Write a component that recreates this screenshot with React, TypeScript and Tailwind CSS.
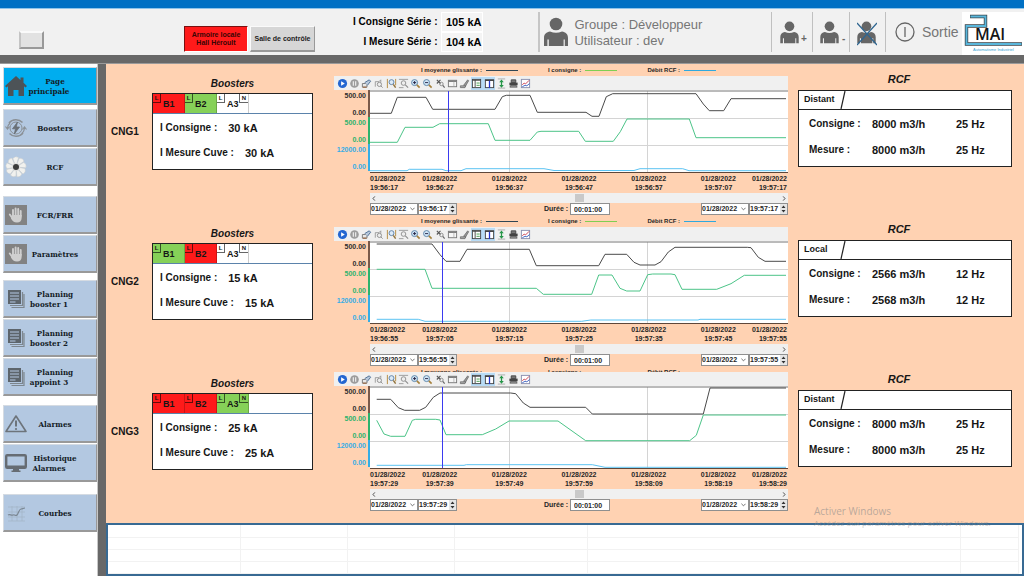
import { ReactNode } from "react";

type BoosterColor = "red" | "green" | "white";

interface TrendData {
  black: string;
  green: string;
  blue: string;
  cursor: number;
  times: string[];
}

interface Cell {
  name: string;
  boosters: BoosterColor[];
  consigne: string;
  mesure: string;
  rcfMode: string;
  rcfConsigne: [string, string];
  rcfMesure: [string, string];
  trend: TrendData;
}

const DATE = "01/28/2022";

const cells: Cell[] = [
  {
    name: "CNG1",
    boosters: ["red", "green", "white"],
    consigne: "30 kA",
    mesure: "30 kA",
    rcfMode: "Distant",
    rcfConsigne: ["8000 m3/h", "25 Hz"],
    rcfMesure: ["8000 m3/h", "25 Hz"],
    trend: {
      black:
        "0,22.3 21.3,22.3 27.3,6.3 56,6.3 62.7,18.3 125,18.3 132.3,5.7 136.3,4.3 160,4.3 167.3,21.3 216,21.3 222,25.3 229,25.3 236.3,5.7 242.7,2.7 326,2.7 333.3,13 339.3,19.7 353.7,19.7 361,7.7 416,7.7",
      green:
        "0,51.3 27.3,51.3 35,36.3 63,36.3 69.7,32.7 118.3,32.7 125,49.3 160,49.3 167.3,41 171,40.3 208.7,40.3 215.3,50.3 243.3,50.3 250.3,40.7 257,28 319.3,28 326,46.7 416,46.7",
      blue: "0,79.7 37,79.7 39.3,78.3 72,78.3 76,79.7 91,79.7 96,77.7 174,77.7 184,79.5 264,79.5 270,77.7 312.7,77.7 319,79.7 416,79.7",
      cursor: 78,
      times: ["19:56:17", "19:56:27", "19:56:37", "19:56:47", "19:56:57", "19:57:07", "19:57:17"],
    },
  },
  {
    name: "CNG2",
    boosters: ["green", "red", "white"],
    consigne: "15 kA",
    mesure: "15 kA",
    rcfMode: "Local",
    rcfConsigne: ["2566 m3/h", "12 Hz"],
    rcfMesure: ["2568 m3/h", "12 Hz"],
    trend: {
      black:
        "6.7,2 62,2 70,12.7 76,19.3 90,19.3 97,7.3 159.3,7.3 166.3,23.7 228.7,23.7 235,12.3 256.7,12.3 264,20.3 270,23 285,23 291,19.7 298.3,10 305,5.3 377.3,5.3 381,5.7 388.3,15.3 395,19.3 416,19.3",
      green:
        "6.7,27.3 55,27.3 62,46.3 166.3,46.3 173.3,52.3 221.7,52.3 228.7,33 242,33 250,46.3 256.7,49 270,49 277.7,32.7 282.7,32 301,32 305,32.7 312,47.3 346.7,47.3 361,41.7 374.3,33.3 416,33.3",
      blue: "6.7,77.3 48.3,77.3 55,79.3 211.7,79.3 220.7,78 328,78 330,77.3 416,77.3",
      cursor: 72,
      times: ["19:56:55", "19:57:05", "19:57:15", "19:57:25", "19:57:35", "19:57:45", "19:57:55"],
    },
  },
  {
    name: "CNG3",
    boosters: ["red", "red", "green"],
    consigne: "25 kA",
    mesure: "25 kA",
    rcfMode: "Distant",
    rcfConsigne: ["8000 m3/h", "25 Hz"],
    rcfMesure: ["8000 m3/h", "25 Hz"],
    trend: {
      black:
        "6.7,12.3 20.7,12.3 28.3,20.7 34.7,23.3 49.7,23.3 55.7,20.3 63.3,10.3 70,6 140.7,6 145.7,6.7 153.3,16 160,20.3 215.7,20.3 222.3,27 333.3,27 340,1 416,1",
      green:
        "6.7,33.3 14,47 20.7,49.3 35,49.3 42.3,33.3 45.7,32.3 65.7,32.3 70,33 76,47.7 112.3,47.7 125.7,42 139,34 188,34 215.7,53.7 319.7,53.7 326.3,48.3 333.3,28 416,28",
      blue: "6.7,78.3 94,78.3 96.3,77.7 222.3,77.7 235,80.3 416,80.3",
      cursor: 72,
      times: ["19:57:29", "19:57:39", "19:57:49", "19:57:59", "19:58:09", "19:58:19", "19:58:29"],
    },
  },
];

const boosterBg: Record<BoosterColor, string> = {
  red: "bg-[#ff1a1a]",
  green: "bg-[#86d158]",
  white: "bg-white",
};

/* ---------- icons ---------- */

function UserIcon({ className }: { className?: string }) {
  return (
    <svg viewBox="0 0 24 30" className={className} fill="#666">
      <circle cx="12" cy="7" r="6.3" />
      <path d="M0 29V21c0-4 2.500-6 6-6.500Q12 17 18 14.500c3.500.5 6 2.500 6 6.500v8h-3.200v-6.500h-1.200V29H4.800v-6.500H3.400V29Z" />
    </svg>
  );
}

const HomeIcon = () => (
  <svg viewBox="0 0 22 22" className="size-[22px] shrink-0" fill="#4d5357">
    <path d="M11 1 0 11l1.500 1.500L3 11.300V21h5.500v-6h5v6H19v-9.700l1.500 1.200L22 11l-3.500-3.200V2.500h-3v2.600Z" />
  </svg>
);

const BoostIcon = () => (
  <svg viewBox="0 0 22 22" className="size-[22px] shrink-0" fill="none" stroke="#8a9096" strokeWidth="1.600">
    <path d="M4 6a9 9 0 0 1 13.500-.5M18 16a9 9 0 0 1-13.500.5" />
    <path d="M2.500 11A8.500 8.500 0 0 1 5 6M19.500 11a8.500 8.500 0 0 1-2.500 5.500" strokeWidth="1.200" />
    <path d="m.5 9.500 2 2.500 2-2.500M17.500 12.500l2-2.500 2 2.500" strokeWidth="1.200" />
    <circle cx="11" cy="11" r="6" strokeWidth="1" />
    <path d="m12.500 5-5 6.800h3L9.300 17l5.200-7h-3.200Z" fill="#6a7076" stroke="#6a7076" strokeWidth=".8" />
  </svg>
);

const FanIcon = () => (
  <svg viewBox="0 0 22 22" className="size-[22px] shrink-0">
    {[0, 40, 80, 120, 160, 200, 240, 280, 320].map((a) => (
      <path
        key={a}
        d="M11 11 7.800 2.500Q10.500-.5 13.500 1.500Z"
        transform={`rotate(${a} 11 11)`}
        fill="#f1f1ee"
        stroke="#c9ccce"
        strokeWidth=".5"
      />
    ))}
    <circle cx="11" cy="11" r="4" fill="#ddd" />
    <circle cx="11" cy="11" r="3" fill="#3c3c3c" />
  </svg>
);

const HandIcon = () => (
  <svg viewBox="0 0 22 20" className="h-[20px] w-[22px] shrink-0">
    <rect width="22" height="20" fill="#828282" />
    <g stroke="#cfcfcf" strokeLinecap="round" strokeWidth="1.900">
      <path d="M8 11V5M10.600 10V3.500M13.200 10V4M15.700 11V6M4.800 9.500 8 14" />
    </g>
    <path d="M7 10h9.700v2.500c0 3-1.500 5-4.700 5s-4.500-1.500-6-4Z" fill="#cfcfcf" />
  </svg>
);

const PagesIcon = () => (
  <svg viewBox="0 0 22 22" className="size-[22px] shrink-0" fill="none">
    <path d="M6.500 19.500H19V6M5 17.500h12.500V4" stroke="#7d868e" strokeWidth="1.200" />
    <rect x="3" y="2" width="13" height="14" fill="#5d656c" />
    <path d="M5 5h9M5 8h9M5 11h9M5 14h5.500" stroke="#b3c8e1" strokeWidth="1.200" />
  </svg>
);

const WarnIcon = () => (
  <svg viewBox="0 0 22 20" className="h-[20px] w-[22px] shrink-0" fill="none" stroke="#6d747b">
    <path d="M11 2 1 17.500h20Z" strokeWidth="1.600" strokeLinejoin="round" />
    <path d="M11 6.500v6" strokeWidth="2" />
    <circle cx="11" cy="15" r="1.100" fill="#6d747b" stroke="none" />
  </svg>
);

const ScreenIcon = () => (
  <svg viewBox="0 0 22 20" className="h-[20px] w-[22px] shrink-0" fill="none">
    <rect x="1.200" y="2.200" width="19.600" height="12.600" rx="1" stroke="#666c73" strokeWidth="2.400" />
    <path d="M2 12.500h18V15H2ZM8 15h6v2.500h1.500V19h-9v-1.500H8Z" fill="#666c73" />
  </svg>
);

const CurveIcon = () => (
  <svg viewBox="0 0 22 18" className="h-[18px] w-[22px] shrink-0" fill="none">
    <path d="M3 3h17M3 8h17M3 13h17M3 17h17M7 2v15M12 2v15M17 2v15" stroke="#a3b4c6" strokeWidth=".7" />
    <path d="M3 11c2-1.500 3 1 5 0s2.500 1.500 4 0 2-6 4-6 2-1 4-1" stroke="#7b8793" strokeWidth="1.200" />
  </svg>
);

function Logo() {
  return (
    <svg viewBox="0 0 62 43" className="h-[43px] w-[62px] bg-white" role="img" aria-label="2MAI">
      <path d="M8 4.500h15.500v9.500H4.500v18H60" fill="none" stroke="#3c4348" strokeWidth="3.400" />
      <path d="M8.500 4.500h15v9.500H4.500v18H59.500" fill="none" stroke="#59b7dc" strokeWidth="1.900" />
      <text x="13" y="28" fontSize="16" fontFamily="Open Sans, sans-serif" fontWeight="600" fill="#161616">
        MAI
      </text>
      <text x="11" y="38.500" fontSize="4" fontFamily="Liberation Sans, sans-serif" fill="#35a3d3">
        Automatisme Industriel
      </text>
    </svg>
  );
}

/* ---------- sidebar ---------- */

interface NavItem {
  lines: string[];
  icon: ReactNode;
  active?: boolean;
}

const navGroups: { gap: string; items: NavItem[] }[] = [
  { gap: "mt-[3px]", items: [{ lines: ["Page", "principale"], icon: <HomeIcon />, active: true }] },
  {
    gap: "mt-1",
    items: [
      { lines: ["Boosters"], icon: <BoostIcon /> },
      { lines: ["RCF"], icon: <FanIcon /> },
    ],
  },
  {
    gap: "mt-2.5",
    items: [
      { lines: ["FCR/FRR"], icon: <HandIcon /> },
      { lines: ["Paramètres"], icon: <HandIcon /> },
    ],
  },
  {
    gap: "mt-[7px]",
    items: [
      { lines: ["Planning", "booster 1"], icon: <PagesIcon /> },
      { lines: ["Planning", "booster 2"], icon: <PagesIcon /> },
      { lines: ["Planning", "appoint 3"], icon: <PagesIcon /> },
    ],
  },
  {
    gap: "mt-[9px]",
    items: [
      { lines: ["Alarmes"], icon: <WarnIcon /> },
      { lines: ["Historique", "Alarmes"], icon: <ScreenIcon /> },
    ],
  },
  { gap: "mt-3", items: [{ lines: ["Courbes"], icon: <CurveIcon /> }] },
];

function Sidebar() {
  return (
    <nav className="w-[98px] shrink-0 border-r border-[#c8c8c8] bg-white pl-[3px]">
      {navGroups.map((group, i) => (
        <div key={i} className={"flex flex-col gap-px " + group.gap}>
          {group.items.map((item) => (
            <button
              key={item.lines.join(" ")}
              className={
                "flex h-[38px] w-[94px] items-center border border-t-[#d5dbe2] border-l-[#d5dbe2] border-r-[#999] border-b-[#999] border-b-2 pl-px font-['DejaVu_Serif_Condensed','DejaVu_Serif',serif] text-[8px] leading-[10px] font-bold text-[#141c26] " +
                (item.active ? "bg-[#00adef]" : "bg-[#b3c8e1]")
              }
            >
              {item.icon}
              <span className="w-14">
                {item.lines.map((line, n) => (
                  <span key={line} className={"block " + (n === 1 ? "pr-3" : "")}>
                    {line}
                  </span>
                ))}
              </span>
            </button>
          ))}
        </div>
      ))}
    </nav>
  );
}

/* ---------- header ---------- */

function Header() {
  return (
    <header className="flex h-[47px] items-center border-t border-[#8fc4ea] bg-[#f1f1f1] pr-0">
      <button
        aria-label="Acquitter"
        className="mt-[15px] ml-[19px] h-[18px] w-[25px] border-2 border-t-[#fafafa] border-r-[#999] border-b-[#999] border-l-[#c4c4c4] bg-[#e2e2e2]"
      />
      <div className="mt-[14px] ml-[140px] flex gap-[2px] text-center text-[7px] leading-[8px] font-bold">
        <button className="h-[26px] w-[64px] border border-t-[#7a1010] border-r-[#fff] border-b-[#fff] border-l-[#7a1010] bg-[#ff1a1a] text-[#3a0505]">
          Armoire locale
          <br />
          Hall Héroult
        </button>
        <button className="h-[26px] w-[65px] border border-t-[#fafafa] border-r-[#999] border-b-[#999] border-l-[#fafafa] border-b-2 bg-[#d6d6d6] whitespace-nowrap text-[#222]">
          Salle de contrôle
        </button>
      </div>
      <dl className="ml-[38px] grid grid-cols-[auto_42px] items-center gap-x-1 text-right text-[10px] leading-5 font-bold text-black">
        <dt>I Consigne Série :</dt>
        <dd className="border border-white bg-[#f4f4f4] pr-px text-[11px] leading-[18px]">105 kA</dd>
        <dt>I Mesure Série :</dt>
        <dd className="border border-white bg-[#f4f4f4] pr-px text-[11px] leading-[18px]">104 kA</dd>
      </dl>
      <div className="ml-[55px] flex h-10 items-center border-l-2 border-[#c6c6c6] pl-1">
        <UserIcon className="h-[30px] w-[24px]" />
        <p className="mt-0.5 ml-[6px] text-[13px] leading-4 text-[#767676]">
          Groupe : Développeur
          <br />
          Utilisateur : dev
        </p>
      </div>
      <div className="ml-auto flex h-10 items-stretch text-[#666]">
        <button aria-label="Ajouter un utilisateur" className="flex w-[41px] items-center border-l border-[#c0c0c0] pl-[8px]">
          <UserIcon className="h-[23px] w-[19px]" />
          <b className="mt-3 ml-[2px] text-[10px]">+</b>
        </button>
        <button aria-label="Retirer un utilisateur" className="flex w-[37px] items-center border-l border-[#c0c0c0] pl-[7px]">
          <UserIcon className="h-[23px] w-[19px]" />
          <b className="mt-3 ml-[3px] text-[10px]">-</b>
        </button>
        <button aria-label="Déconnecter" className="relative flex w-[36px] items-center border-l border-[#c0c0c0] pl-[7px]">
          <UserIcon className="h-[23px] w-[19px]" />
          <svg viewBox="0 0 20 24" className="absolute top-[10px] left-[7px] h-[24px] w-[20px]" stroke="#2f6690" strokeWidth="1.200">
            <path d="m0 1 20 22M20 1 0 23" />
          </svg>
        </button>
        <button className="flex w-[77px] items-center gap-[7px] border-l border-[#c0c0c0] pl-[9px] text-[14px]">
          <svg viewBox="0 0 20 20" className="size-5 shrink-0" fill="none" stroke="#666" strokeWidth="1.300">
            <circle cx="10" cy="10" r="9" />
            <path d="M10 5v10" />
          </svg>
          <span className="text-[#767676]">Sortie</span>
        </button>
        <Logo />
      </div>
    </header>
  );
}

/* ---------- trend ---------- */

const magnifier = (extra: ReactNode) => (
  <>
    <circle cx="5" cy="5" r="3.300" fill="#cfe4f5" stroke="#5a83a8" />
    <path d="m7.500 7.500 3 3" stroke="#a5813c" strokeWidth="1.800" />
    {extra}
  </>
);

const tools: { name: string; on?: boolean; art: ReactNode }[] = [
  {
    name: "Démarrer",
    art: (
      <>
        <circle cx="6" cy="6" r="5" fill="#2467d1" />
        <path d="m4.500 3.500 4 2.500-4 2.500Z" fill="#fff" />
      </>
    ),
  },
  {
    name: "Pause",
    art: (
      <>
        <circle cx="6" cy="6" r="4.700" fill="#9c9c9c" />
        <path d="M4.700 3.500v5M7.300 3.500v5" stroke="#f5f5f5" strokeWidth="1.200" />
      </>
    ),
  },
  {
    name: "Configurer",
    art: (
      <>
        <path d="M1.500 6h5v4h-5Z" fill="#e8e8e8" stroke="#777" />
        <path d="m4 5 5-3 1.500 1.500L7 8" fill="#b9c9dc" stroke="#496b92" />
        <path d="M2 10h4" stroke="#9a5b2a" />
      </>
    ),
  },
  {
    name: "Zone",
    art: (
      <>
        <path d="M2.500 9.500V4h4l2-2v3" stroke="#999" />
        <circle cx="7" cy="7" r="2.300" fill="#eee" stroke="#8d8d8d" />
        <path d="m8.500 8.500 2 2" stroke="#8d8d8d" />
      </>
    ),
  },
  {
    name: "Zoom temps",
    art: (
      <>
        <path d="M1.500 1v10M10.500 1v7" stroke="#b48a3c" />
        <circle cx="6" cy="4.500" r="2.700" fill="#dceaf7" stroke="#5b7fa6" />
        <path d="m8 7 2.500 3.500" stroke="#8f7038" strokeWidth="1.500" />
      </>
    ),
  },
  {
    name: "Zoom valeur",
    art: (
      <>
        <path d="M1 1.500h10M1 10.500h5" stroke="#999" />
        <circle cx="6" cy="5.500" r="2.500" fill="#eee" stroke="#8d8d8d" />
        <path d="m8 7.500 3 3" stroke="#8d8d8d" strokeWidth="1.300" />
      </>
    ),
  },
  { name: "Zoom avant", art: magnifier(<path d="M3.300 5h3.400M5 3.300v3.400" stroke="#224" />) },
  { name: "Zoom arrière", art: magnifier(<path d="M3.300 5h3.400" stroke="#224" />) },
  {
    name: "Annuler zoom",
    art: (
      <>
        <path d="m2 2 4 4M6 2 2 6" stroke="#555" strokeWidth="1.200" />
        <circle cx="7" cy="6.500" r="1.900" stroke="#888" />
        <path d="m8.500 8 2 2.500" stroke="#666" strokeWidth="1.300" />
      </>
    ),
  },
  {
    name: "Tableau",
    art: (
      <>
        <rect x="1.500" y="2.500" width="9" height="7" fill="#f6f6f6" stroke="#777" />
        <path d="M1.500 3.500h9" stroke="#777" strokeWidth="1.600" />
        <path d="M7.500 4v5" stroke="#aaa" strokeWidth=".8" />
      </>
    ),
  },
  {
    name: "Éditer",
    art: (
      <>
        <path d="m5 8 4.500-6 1 1L7 9Z" fill="#999" stroke="#666" strokeWidth=".8" />
        <path d="M1.500 8.500h6l-1 2h-5Z" fill="#aaa" stroke="#666" strokeWidth=".8" />
      </>
    ),
  },
  {
    name: "Légende",
    on: true,
    art: (
      <>
        <rect x="1.500" y="1.500" width="9" height="9" fill="#fff" stroke="#444" />
        <path d="M4.500 2v8" stroke="#444" />
        <path d="M1.500 2.500h9" stroke="#444" />
        <path d="M6 5.500h3.500M6 8h3.500" stroke="#3f9a4a" />
      </>
    ),
  },
  {
    name: "Curseur",
    on: true,
    art: (
      <>
        <rect x="1.500" y="2" width="9" height="8.500" fill="#fff" stroke="#444" />
        <path d="M1 2.500h10" stroke="#444" strokeWidth="1.600" />
        <path d="M6 3v8" stroke="#2336d0" strokeWidth="1.400" />
      </>
    ),
  },
  {
    name: "Échelle",
    art: (
      <>
        <path d="M2 1h8M2 11h8" stroke="#aaa" />
        <path d="M6 1.500 8.500 4.500h-5ZM6 10.500 3.500 7.500h5Z" fill="#27964a" />
        <path d="M6 4v4" stroke="#27964a" strokeWidth="1.400" />
      </>
    ),
  },
  {
    name: "Imprimer",
    art: (
      <>
        <path d="M3.500 2h5v3h-5Z" fill="#777" stroke="#444" />
        <path d="M1.500 5h9v3h-9Z" fill="#444" />
        <path d="M3 8h6l1 2H2Z" fill="#999" stroke="#444" strokeWidth=".7" />
      </>
    ),
  },
  {
    name: "Exporter",
    art: (
      <>
        <rect x="1.500" y="1.500" width="9" height="9" fill="#fff" stroke="#8a8fae" />
        <path d="m2.500 7.500 2-2 1.500 1 4-4" stroke="#cc3b4c" />
        <path d="m2.500 9.500 3-1.500 2 .5 3-2.500" stroke="#3b62c2" />
      </>
    ),
  },
];

const legend = [
  { label: "I moyenne glissante :", line: "bg-[#2f4654]" },
  { label: "I consigne :", line: "bg-[#7fcf52]" },
  { label: "Débit RCF :", line: "bg-[#2fa9de]" },
];

const axes = [
  { max: "500.00", color: "text-[#2e2e2e] border-[#7a5a4a]" },
  { max: "500.00", color: "text-[#2db36d] border-[#2db36d]" },
  { max: "12000.00", color: "text-[#35ade5] border-[#35ade5]" },
];

function DateTimeField({ label, time }: { label: string; time: string }) {
  return (
    <div className="flex">
      <span className="relative block">
        <select
          aria-label={label + " date"}
          className="block h-3 w-[48px] appearance-none border border-[#8f8f8f] bg-white leading-[10px]"
        >
          <option>{DATE}</option>
        </select>
        <svg viewBox="0 0 6 4" className="pointer-events-none absolute top-1 right-[3px] h-1 w-[5px]" fill="none" stroke="#555">
          <path d="m.5.5 2.500 2.500L5.500.5" />
        </svg>
      </span>
      <span className="flex h-3 w-[39px] items-center border border-[#8f8f8f] bg-white">
        <input
          aria-label={label + " heure"}
          defaultValue={time}
          className="w-0 flex-1 leading-[10px] outline-none"
        />
        <svg viewBox="0 0 7 10" className="h-[10px] w-[7px] bg-[#e6e6e6]" fill="#333">
          <path d="M3.500 1.500 5.500 4h-4ZM3.500 8.500 5.500 6h-4Z" />
        </svg>
      </span>
    </div>
  );
}

// the last trend window sits higher, its toolbar runs over the legend
function Trend({ cell, raised }: { cell: Cell; raised: boolean }) {
  const { trend, name } = cell;
  return (
    <section className="text-[7px] font-bold text-[#262626]">
      <ul className="flex h-3 items-center gap-[30px] pl-[87px] text-[6px] leading-3">
        {legend.map((item) => (
          <li key={item.label} className="flex items-center gap-1">
            {item.label}
            <i className={"block h-px w-8 " + item.line} />
          </li>
        ))}
      </ul>
      <div className={"relative h-[14px] bg-[#f0f0f0] pl-[2px] " + (raised ? "-mt-[6px]" : "")}>
        <div className="flex h-full w-[196px] items-center justify-between">
          {tools.map((tool) => (
            <button
              key={tool.name}
              aria-label={tool.name}
              className={"flex h-[13px] w-3 items-center justify-center " + (tool.on ? "bg-[#b9dcf6]" : "")}
            >
              <svg viewBox="0 0 12 12" className="size-[11px]" fill="none">
                {tool.art}
              </svg>
            </button>
          ))}
        </div>
      </div>
      <div className="flex">
        <div className="w-9 shrink-0">
          {axes.map((axis, i) => (
            <div
              key={i}
              className={"flex h-[27px] flex-col justify-between border-r-2 pt-px pr-[2px] text-right leading-[9px] " + axis.color}
            >
              <span className="-ml-2">{axis.max}</span>
              <span>0.00</span>
            </div>
          ))}
        </div>
        <div className="min-w-0 flex-1">
          <svg
            viewBox="0 0 418 83"
            preserveAspectRatio="none"
            className="block h-[83px] w-full bg-white"
            fill="none"
            role="img"
            aria-label={"Courbes " + name}
          >
            <g stroke="#d4d4d4">
              <path d="M0 28.500h418M0 55.500h418M139.500 1v82M277.500 1v82" />
            </g>
            <path d="M0 1h418" stroke="#777" />
            <g strokeWidth="1" transform="translate(0 1)">
              <polyline points={trend.black} stroke="#4a4a4a" />
              <polyline points={trend.green} stroke="#4cc488" />
              <polyline points={trend.blue} stroke="#5cc3f2" />
            </g>
            <path d={`M${trend.cursor + 0.5} 1v81`} stroke="#3b3bf0" />
            <path d="M0 82.500h418" stroke="#5e473a" />
          </svg>
          <div className="grid h-5 grid-cols-12 content-center text-center leading-[9px]">
            {trend.times.map((time, i) => (
              <span
                key={time}
                className={
                  i === 0 ? "text-left" : i === trend.times.length - 1 ? "justify-self-end pr-px text-right" : "col-span-2"
                }
              >
                {DATE}
                <br />
                {time}
              </span>
            ))}
          </div>
          <div className="flex h-[10px] items-center justify-between bg-[#f0f0f0] px-[2px] leading-[9px]">
            <svg viewBox="0 0 4 6" className="h-[5px] w-1" fill="none" stroke="#333">
              <path d="M3 .5.800 3 3 5.500" />
            </svg>
            <span className="h-2 w-[9px] bg-[#c9c9c9]" />
            <svg viewBox="0 0 4 6" className="h-[5px] w-1" fill="none" stroke="#333">
              <path d="M1 .5 3.200 3 1 5.500" />
            </svg>
          </div>
          <div className="flex h-3 items-center justify-between">
            <DateTimeField label={"Début " + name} time={trend.times[0]} />
            <label className="flex items-center gap-[2px] pr-1">
              Durée :
              <input
                defaultValue="00:01:00"
                className="block h-3 w-10 border border-[#8f8f8f] bg-white pl-[3px] leading-[10px]"
              />
            </label>
            <DateTimeField label={"Fin " + name} time={trend.times[6]} />
          </div>
        </div>
      </div>
    </section>
  );
}

/* ---------- panels ---------- */

function BoosterPanel({ cell }: { cell: Cell }) {
  return (
    <section className="grid grid-cols-[46px_161px] text-[10px] font-bold text-[#161616]">
      <h2 className="col-start-2 mb-px text-center leading-4 italic">Boosters</h2>
      <h3 className="self-center pl-[5px]">{cell.name}</h3>
      <div className="h-[77px] border border-[#222] bg-white">
        <div className="flex h-5 border-b border-[#5b83ab]">
          {["B1", "B2", "A3"].map((label, i) => (
            <div
              key={label}
              className={"flex w-8 border-r border-[#0003] text-[9px] leading-[20px] " + boosterBg[cell.boosters[i]]}
            >
              <span className="h-[9px] w-2 border-r border-b border-[#0009] text-center text-[6px] leading-[8px]">L</span>
              <span className="ml-[2px]">{label}</span>
              {label === "A3" && (
                <span className="ml-auto h-[9px] w-[9px] border-b border-l border-[#0009] text-center text-[6px] leading-[8px]">
                  N
                </span>
              )}
            </div>
          ))}
        </div>
        <dl className="flex flex-col gap-[9px] pt-[6px] pl-[7px] leading-4">
          <div className="flex gap-[11px]">
            <dt>I Consigne :</dt>
            <dd className="text-[11px]">{cell.consigne}</dd>
          </div>
          <div className="flex gap-[11px]">
            <dt>I Mesure Cuve :</dt>
            <dd className="text-[11px]">{cell.mesure}</dd>
          </div>
        </dl>
      </div>
    </section>
  );
}

function RcfPanel({ cell }: { cell: Cell }) {
  return (
    <section className="text-[11px] font-bold text-[#161616]">
      <h2 className="mb-[3px] pr-3 text-center leading-4 italic">RCF</h2>
      <div className="h-[77px] border border-[#222] bg-white">
        <div className="flex h-[19px] items-center border-b border-[#222] pl-[5px] text-[9px]">
          <span className="w-9">{cell.rcfMode}</span>
          <svg viewBox="0 0 6 18" className="h-[18px] w-[6px]" stroke="#222" strokeWidth="1.200">
            <path d="M5 0 1 18" />
          </svg>
        </div>
        <table className="mt-[6px] ml-[10px] leading-4">
          <tbody>
            <tr>
              <th scope="row" className="w-[63px] pb-[10px] text-left text-[10px]">
                Consigne :
              </th>
              <td className="w-[84px] pb-[10px]">{cell.rcfConsigne[0]}</td>
              <td className="pb-[10px]">{cell.rcfConsigne[1]}</td>
            </tr>
            <tr>
              <th scope="row" className="text-left text-[10px]">
                Mesure :
              </th>
              <td>{cell.rcfMesure[0]}</td>
              <td>{cell.rcfMesure[1]}</td>
            </tr>
          </tbody>
        </table>
      </div>
    </section>
  );
}

function AlarmTable() {
  const widths = ["w-[132px]", "w-[107px]", "w-[107px]", "w-[133px]", "", "w-[58px]"];
  return (
    <div className="flex-1 border-2 border-[#386a93] bg-white pr-[3px]">
      <table aria-label="Alarmes en cours" className="w-full table-fixed border-collapse">
        <tbody>
          {[0, 1, 2, 3].map((row) => (
            <tr key={row} className="h-3">
              {widths.map((w, i) => (
                <td key={i} className={"border-r border-b border-[#f2f2f2] p-0 " + w} />
              ))}
            </tr>
          ))}
        </tbody>
      </table>
    </div>
  );
}

export default function App() {
  return (
    <div className="relative flex min-h-screen flex-col bg-[#686868] font-['Liberation_Sans',Arial,sans-serif]">
      <div className="h-2 bg-[#0070c4]" />
      <Header />
      <div className="mt-2 flex flex-1 border-t border-[#9a9a9a]">
        <Sidebar />
        <div className="ml-2 flex min-w-0 flex-1 flex-col">
          <main className="grid grid-cols-[228px_1fr_236px] bg-[#ffd2b2] pb-3">
            <div className="flex flex-col gap-[56px] pt-3">
              {cells.map((cell) => (
                <BoosterPanel key={cell.name} cell={cell} />
              ))}
            </div>
            <div>
              {cells.map((cell, i) => (
                <Trend key={cell.name} cell={cell} raised={i === 2} />
              ))}
            </div>
            <div className="flex flex-col gap-[54px] pt-[7px] pr-3 pl-[10px]">
              {cells.map((cell) => (
                <RcfPanel key={cell.name} cell={cell} />
              ))}
            </div>
          </main>
          <AlarmTable />
        </div>
      </div>
      <div className="pointer-events-none absolute right-[40px] bottom-[48px] w-[170px] font-['Open_Sans',sans-serif] whitespace-nowrap text-[#8a8a8a]/60">
        <p className="text-[10px] leading-[14px]">Activer Windows</p>
        <p className="text-[8px] leading-[10px] text-[#8a8a8a]/50">Accédez aux paramètres pour activer Windows.</p>
      </div>
    </div>
  );
}
